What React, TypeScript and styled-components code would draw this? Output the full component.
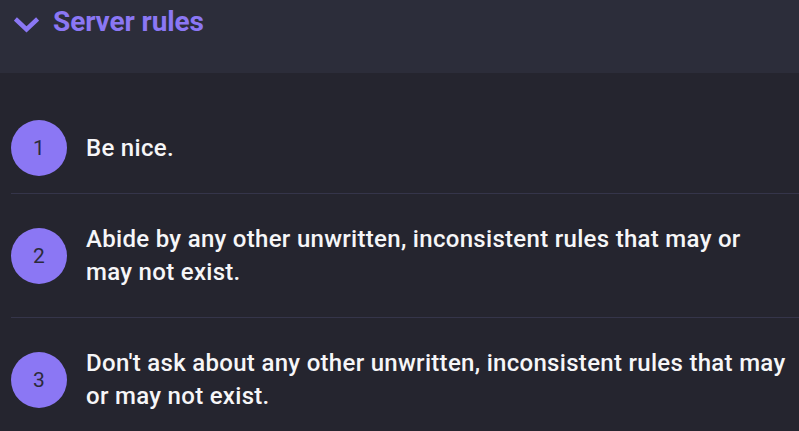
import React from 'react';
import styled, { createGlobalStyle } from 'styled-components';

const GlobalStyle = createGlobalStyle`
  html, body {
    margin: 0;
    padding: 0;
    background: #25252f;
    overflow: hidden;
  }
  body {
    font-family: Roboto, "Liberation Sans", sans-serif;
  }
`;

const Page = styled.div`
  width: 799px;
  height: 431px;
  background: #25252f;
  overflow: hidden;
`;

const Header = styled.div`
  height: 73px;
  box-sizing: border-box;
  background: #2c2d3a;
  display: flex;
  align-items: flex-start;
  gap: 14px;
  padding: 5px 0 0 14px;
`;

const Title = styled.h2`
  margin: 0;
  font-size: 28px;
  font-weight: 700;
  line-height: 34px;
  color: #8b77f4;
  letter-spacing: -0.1px;
`;

const Chevron = styled.svg`
  width: 25px;
  height: 16px;
  margin-top: 12px;
  flex-shrink: 0;
`;

const RuleList = styled.ol`
  list-style: none;
  margin: 0;
  padding: 30px 0 0 11px;
  width: 799px;
  box-sizing: border-box;
`;

const Rule = styled.li`
  display: flex;
  align-items: center;
  gap: 19px;
  padding: 16px 0;
  border-bottom: 1px solid #35354a;

  &:last-child {
    border-bottom: none;
  }
`;

const Badge = styled.span`
  width: 56px;
  height: 56px;
  flex-shrink: 0;
  border-radius: 50%;
  background: #8b77f4;
  color: #2b2b3a;
  font-size: 21px;
  font-weight: 400;
  display: flex;
  align-items: center;
  justify-content: center;
`;

const RuleText = styled.p`
  margin: 0;
  padding: 12.5px 9px 12.5px 0;
  flex: 1;
  font-size: 24px;
  font-weight: 500;
  line-height: 33px;
  letter-spacing: 0.3px;
  color: #f6f6f8;
`;

const rules = [
  'Be nice.',
  'Abide by any other unwritten, inconsistent rules that may or may not exist.',
  "Don't ask about any other unwritten, inconsistent rules that may or may not exist.",
];

export default function App() {
  return (
    <Page>
      <GlobalStyle />
      <Header>
        <Chevron viewBox="0 0 25 16" fill="none">
          <path
            d="M3 3.5 L12.5 12.5 L22 3.5"
            stroke="#8b77f4"
            strokeWidth="4.5"
            strokeLinecap="square"
          />
        </Chevron>
        <Title>Server rules</Title>
      </Header>
      <RuleList>
        {rules.map((text, i) => (
          <Rule key={i}>
            <Badge>{i + 1}</Badge>
            <RuleText>{text}</RuleText>
          </Rule>
        ))}
      </RuleList>
    </Page>
  );
}
